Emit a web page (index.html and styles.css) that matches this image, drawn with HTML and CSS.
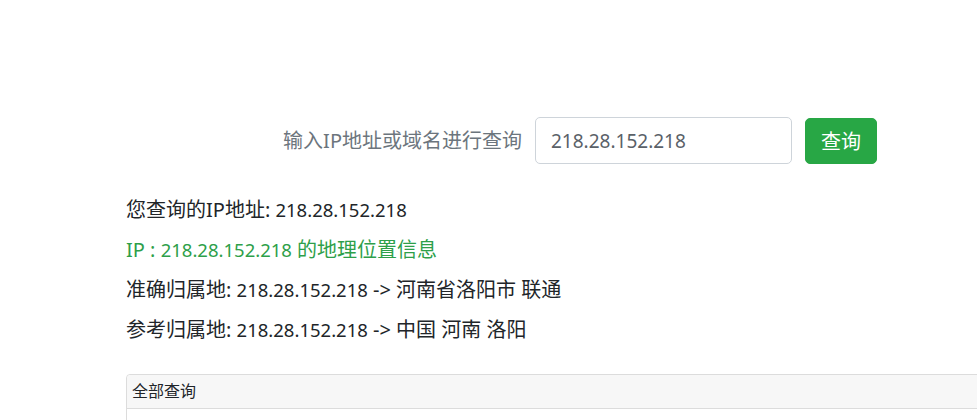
FILE: index.html
```html
<!DOCTYPE html>
<html lang="zh-CN">
<head>
<meta charset="utf-8">
<title>IP地址查询</title>
<link rel="stylesheet" href="styles.css">
</head>
<body>
<div class="page">
  <form class="search-row">
    <label class="search-label" for="ip">输入IP地址或域名进行查询</label>
    <input id="ip" class="search-input" type="text" value="218.28.152.218">
    <button class="search-btn" type="button">查询</button>
  </form>
  <div class="results">
    <p class="result-line">您查询的IP地址: <span class="ip">218.28.152.218</span></p>
    <p class="result-line success">IP : <span class="ip">218.28.152.218</span> 的地理位置信息</p>
    <p class="result-line">准确归属地: <span class="ip">218.28.152.218</span> -&gt; 河南省洛阳市 联通</p>
    <p class="result-line">参考归属地: <span class="ip">218.28.152.218</span> -&gt; 中国 河南 洛阳</p>
  </div>
  <div class="card">
    <div class="card-header">全部查询</div>
    <div class="card-body">
      <div class="card-row">
        <span class="cell">接口</span>
        <span class="cell">IP</span>
        <span class="cell">地区</span>
        <span class="cell">运营商</span>
      </div>
    </div>
  </div>
</div>
</body>
</html>
```
FILE: styles.css
```css
html, body {
  margin: 0;
  padding: 0;
  background: #fff;
  overflow: hidden;
}
body {
  font-family: "Noto Sans", "Noto Sans CJK SC", sans-serif;
  color: #212529;
  width: 977px;
  height: 420px;
}
.page {
  padding: 117px 0 0 126px;
}
.search-row {
  display: flex;
  justify-content: flex-end;
  align-items: center;
  width: 751px;
  margin: 0;
}
.search-label {
  font-size: 20px;
  color: #6c757d;
  margin-right: 13px;
  line-height: 46px;
}
.search-input {
  box-sizing: border-box;
  width: 257px;
  height: 47px;
  border: 1px solid #ced4da;
  border-radius: 5px;
  padding: 0 15px;
  font-family: "Noto Sans", "Noto Sans CJK SC", sans-serif;
  font-size: 19px;
  color: #5a6168;
  outline: none;
}
.search-btn {
  box-sizing: border-box;
  margin-left: 13px;
  width: 72px;
  height: 46px;
  border: 1px solid #28a745;
  border-radius: 5px;
  background: #28a745;
  color: #fff;
  font-family: "Noto Sans", "Noto Sans CJK SC", sans-serif;
  font-size: 20px;
  padding: 0;
}
.results {
  padding-top: 26px;
}
.result-line {
  margin: 0;
  font-size: 20px;
  line-height: 40px;
}
.ip {
  font-size: 18.5px;
}
.success {
  color: #2e9f4a;
}
.card {
  margin-top: 24px;
  width: 900px;
  border: 1px solid #dcdcdc;
  border-radius: 4px;
}
.card-header {
  background: #f7f7f7;
  border-bottom: 1px solid #dcdcdc;
  height: 33px;
  line-height: 33px;
  padding-left: 5px;
  font-size: 16px;
  color: #212529;
  border-radius: 4px 4px 0 0;
}
.card-body {
  padding: 10px 0;
}
.card-row {
  display: grid;
  grid-template-columns: 134px 85px 40px auto;
  padding-left: 291px;
  font-size: 15px;
}
```
